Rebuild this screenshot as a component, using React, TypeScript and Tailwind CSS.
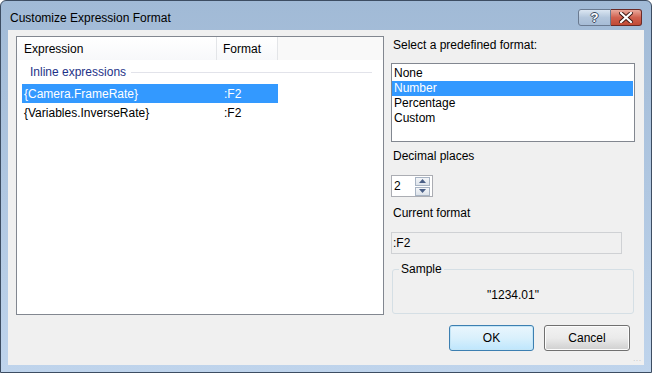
import React from 'react'

const font = { fontFamily: '"Liberation Sans", Arial, sans-serif' }

function TitleButtons() {
  return (
    <div className="flex items-start pt-[8px] pr-[9px]">
      <div className="w-[33px] h-[17px] rounded-l-[3px] border border-[#6a7a90] bg-gradient-to-b from-[#dbe6f2] via-[#b3c6dc] to-[#a6bcd6] flex items-center justify-center text-white text-[13px] font-bold leading-none [text-shadow:1px_0_0_#3a4b62,-1px_0_0_#3a4b62,0_1px_0_#3a4b62,0_-1px_0_#3a4b62]">
        ?
      </div>
      <div className="w-[31px] h-[17px] rounded-r-[3px] border border-l-0 border-[#6b2a26] bg-gradient-to-b from-[#e9a99c] via-[#d0614f] to-[#c14a36] flex items-center justify-center">
        <svg width="14" height="11" viewBox="0 0 14 11">
          <path d="M2 1 L12 10 M12 1 L2 10" stroke="#3b1510" strokeWidth="4" strokeLinecap="square" />
          <path d="M2 1 L12 10 M12 1 L2 10" stroke="#ffffff" strokeWidth="2.2" strokeLinecap="square" />
        </svg>
      </div>
    </div>
  )
}

function ExpressionList() {
  const rows = [
    { expr: '{Camera.FrameRate}', fmt: ':F2', selected: true },
    { expr: '{Variables.InverseRate}', fmt: ':F2', selected: false },
  ]
  return (
    <div className="w-[368px] h-[279px] border border-[#828790] bg-white flex flex-col">
      <div className="h-[23px] flex text-[12px] text-black bg-gradient-to-b from-white to-[#f7f8fa]">
        <div className="w-[200px] pl-[7px] flex items-center border-r border-[#e3e5e8]">Expression</div>
        <div className="w-[61px] pl-[6px] flex items-center border-r border-[#e3e5e8]">Format</div>
        <div className="flex-1 bg-[#f9f9f9]"></div>
      </div>
      <div className="h-[24px] flex items-center pl-[13px] pr-[11px] text-[12px] text-[#1e3287]">
        <span>Inline expressions</span>
        <div className="flex-1 ml-[5px] h-px bg-[#e2e3ea]"></div>
      </div>
      {rows.map((r) => (
        <div
          key={r.expr}
          className={`ml-[5px] w-[256px] h-[19px] flex items-center text-[12px] ${
            r.selected ? 'bg-[#3399ff] text-white' : 'text-black'
          }`}
        >
          <div className="w-[200px] pl-[2px]">{r.expr}</div>
          <div className="pl-[2px]">{r.fmt}</div>
        </div>
      ))}
    </div>
  )
}

function Spinner() {
  return (
    <div className="w-[42px] h-[22px] border border-[#abadb3] bg-white flex items-center">
      <span className="pl-[2px] flex-1 text-[12px] text-black">2</span>
      <div className="w-[15px] h-[19px] mr-[2px] flex flex-col gap-px">
        <div className="h-[9px] border border-[#a8b4c4] bg-gradient-to-b from-[#f4f6f9] to-[#dde3ea] flex items-center justify-center">
          <svg width="7" height="4" viewBox="0 0 7 4">
            <path d="M0 4 L3.5 0 L7 4 Z" fill="#4a5f86" />
          </svg>
        </div>
        <div className="h-[9px] border border-[#a8b4c4] bg-gradient-to-b from-[#f4f6f9] to-[#dde3ea] flex items-center justify-center">
          <svg width="7" height="4" viewBox="0 0 7 4">
            <path d="M0 0 L7 0 L3.5 4 Z" fill="#4a5f86" />
          </svg>
        </div>
      </div>
    </div>
  )
}

function RightPanel() {
  const items = ['None', 'Number', 'Percentage', 'Custom']
  return (
    <div className="w-[244px] flex flex-col text-[12px] text-black">
      <div className="mt-[1px] h-[16px] leading-[16px] pl-[2px]">Select a predefined format:</div>
      <div className="mt-[10px] h-[79px] border border-[#828790] bg-white pt-[2px] pr-[1px] flex flex-col">
        {items.map((it) => (
          <div
            key={it}
            className={`h-[15px] leading-[15px] pl-[2px] ${it === 'Number' ? 'bg-[#3399ff] text-white' : ''}`}
          >
            {it}
          </div>
        ))}
      </div>
      <div className="mt-[6px] h-[16px] leading-[16px] pl-[2px]">Decimal places</div>
      <div className="mt-[11px]">
        <Spinner />
      </div>
      <div className="mt-[8px] h-[16px] leading-[16px] pl-[2px]">Current format</div>
      <div className="mt-[11px] w-[231px] h-[22px] border border-[#cfd1d4] bg-[#f0f0f0] flex items-center pl-[1px]">
        :F2
      </div>
      <div className="mt-[15px] relative w-[242px] h-[45px] ml-[1px] border border-[#d5dfe5] rounded-[3px] flex items-center justify-center pt-[6px]">
        <span className="absolute left-[6px] -top-[9px] px-[2px] bg-[#f0f0f0] leading-[16px]">Sample</span>
        <span>"1234.01"</span>
      </div>
      <div className="mt-[11px] flex justify-end gap-[10px] pr-[5px]">
        <div className="w-[85px] h-[26px] rounded-[3px] border border-[#3c7fb1] bg-gradient-to-b from-[#eaf6fd] via-[#d9f0fc] to-[#bee6fd] flex items-center justify-center shadow-[inset_0_0_0_1px_#c4e5f6]">
          OK
        </div>
        <div className="w-[86px] h-[26px] rounded-[3px] border border-[#707070] bg-gradient-to-b from-[#f2f2f2] via-[#ebebeb] to-[#cfcfcf] flex items-center justify-center shadow-[inset_0_0_0_1px_#fcfcfc]">
          Cancel
        </div>
      </div>
    </div>
  )
}

export default function App() {
  return (
    <div style={font} className="w-[652px] h-[373px] bg-white">
      <div className="w-[652px] h-[373px] rounded-t-[6px] border border-[#3d4d62] bg-gradient-to-b from-[#a1bad6] to-[#bfd4ec] flex flex-col">
        <div className="h-[29px] flex justify-between">
          <div className="pl-[9px] pt-[9px] text-[12px] text-black leading-[16px]">Customize Expression Format</div>
          <TitleButtons />
        </div>
        <div className="mx-[7px] mb-[7px] flex-1 bg-[#f0f0f0] border-b border-[#f0f0f0] flex pl-[8px] pt-[6px] gap-[7px] relative">
          <ExpressionList />
          <RightPanel />
          <div className="absolute right-[2px] bottom-[2px] text-[7px] text-[#b5b5b5] leading-none tracking-[1px]">...</div>
        </div>
      </div>
    </div>
  )
}
